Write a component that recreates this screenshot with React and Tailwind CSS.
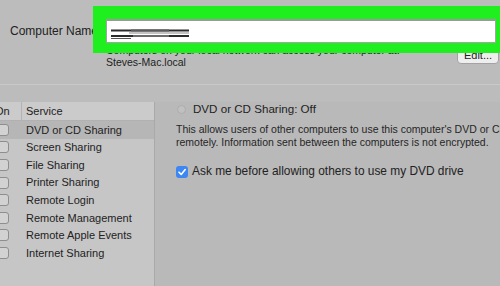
import React from "react";

const services = [
  "DVD or CD Sharing",
  "Screen Sharing",
  "File Sharing",
  "Printer Sharing",
  "Remote Login",
  "Remote Management",
  "Remote Apple Events",
  "Internet Sharing",
];

const Redacted = () => (
  <svg width="80" height="12" viewBox="0 0 80 12" className="absolute left-[4px] top-[7px]">
    <rect x="0" y="1.5" width="78" height="2" fill="#2b2b2b" />
    <rect x="20" y="1.5" width="38" height="2" fill="#5a5a5a" />
    <rect x="18" y="4.5" width="60" height="1" fill="#8a8a8a" />
    <rect x="0" y="7" width="78" height="2" fill="#2b2b2b" />
    <rect x="22" y="7" width="36" height="2" fill="#6a6a6a" />
    <rect x="0" y="10" width="20" height="1" fill="#555" />
  </svg>
);

const Check = () => (
  <svg width="10" height="10" viewBox="0 0 10 10">
    <path d="M2 5.2 L4.2 7.4 L8.2 2.6" fill="none" stroke="#fff" strokeWidth="1.6" strokeLinecap="round" strokeLinejoin="round" />
  </svg>
);

export default function App() {
  return (
    <div className="w-[500px] h-[286px] overflow-hidden bg-[#bcbcbc] text-[#222] font-['Liberation_Sans',Arial,sans-serif]">
      {/* top: computer name */}
      <div className="relative h-[84px] flex">
        <div className="w-[106px] shrink-0 pl-[10px] pt-[24px] text-[12px] leading-[14px] whitespace-nowrap">
          Computer Name
        </div>
        <div className="flex-1 pt-[19px] pr-[4px]">
          <div className="relative h-[24px] bg-white border border-[#a4a4a4] border-t-2 border-t-[#9a9a9a]">
            <Redacted />
          </div>
          <div className="flex justify-between">
            <div className="text-[10.5px] leading-[12px] whitespace-nowrap pt-[1px]">
              <div>Computers on your local network can access your computer at:</div>
              <div>Steves-Mac.local</div>
            </div>
            <button className="mt-[4px] -mr-[3px] h-[17px] w-[42px] bg-[#eeeeee] border border-[#a3a3a3] rounded-[4px] text-[11px] leading-[15px] text-[#222]">
              Edit...
            </button>
          </div>
        </div>
        {/* highlight frame */}
        <div className="absolute left-[93px] top-[6px] w-[407px] h-[47px] border-[#1fef1f] border-t-[13px] border-l-[13px] border-b-[10px] border-r-[4px]" />
      </div>

      <div className="h-px bg-[#c9c9c9]" />

      {/* bottom: services */}
      <div className="mt-[17px] flex h-[184px] bg-[#b9b9b9]">
        <div className="-ml-[10px] w-[165px] shrink-0 bg-[#c6c6c6] border-r border-[#a9a9a9] text-[11px]">
          <div className="flex h-[19px] bg-[#cbcbcb] border-b border-[#b1b1b1] leading-[18px]">
            <div className="w-[32px] pl-[5px] border-r border-[#b3b3b3]">On</div>
            <div className="pl-[4px]">Service</div>
          </div>
          {services.map((s, i) => (
            <div
              key={s}
              className={`flex items-center h-[17.6px] ${i === 0 ? "bg-[#b6b6b6]" : ""}`}
            >
              <div className="w-[32px] pl-[7px]">
                <div className="w-[12px] h-[12px] rounded-[3px] border border-[#8e8e8e] bg-[#d2d2d2]" />
              </div>
              <div className="pl-[4px] whitespace-nowrap">{s}</div>
            </div>
          ))}
        </div>

        <div className="pl-[21px] flex flex-col whitespace-nowrap">
          <div className="flex items-center h-[14px]">
            <div className="ml-[1px] w-[9px] h-[9px] rounded-full border border-[#adadad] bg-[#c0c0c0]" />
            <span className="ml-[7px] text-[11.6px]">DVD or CD Sharing: Off</span>
          </div>
          <div className="mt-[7px] text-[10.5px] leading-[13px] text-[#262626]">
            <div>This allows users of other computers to use this computer's DVD or CD drive</div>
            <div>remotely. Information sent between the computers is not encrypted.</div>
          </div>
          <div className="mt-[16px] flex items-center h-[14px]">
            <div className="w-[12px] h-[12px] rounded-[3px] bg-[#3c87f3] flex items-center justify-center">
              <Check />
            </div>
            <span className="ml-[4px] text-[11.9px]">Ask me before allowing others to use my DVD drive</span>
          </div>
        </div>
      </div>
    </div>
  );
}
